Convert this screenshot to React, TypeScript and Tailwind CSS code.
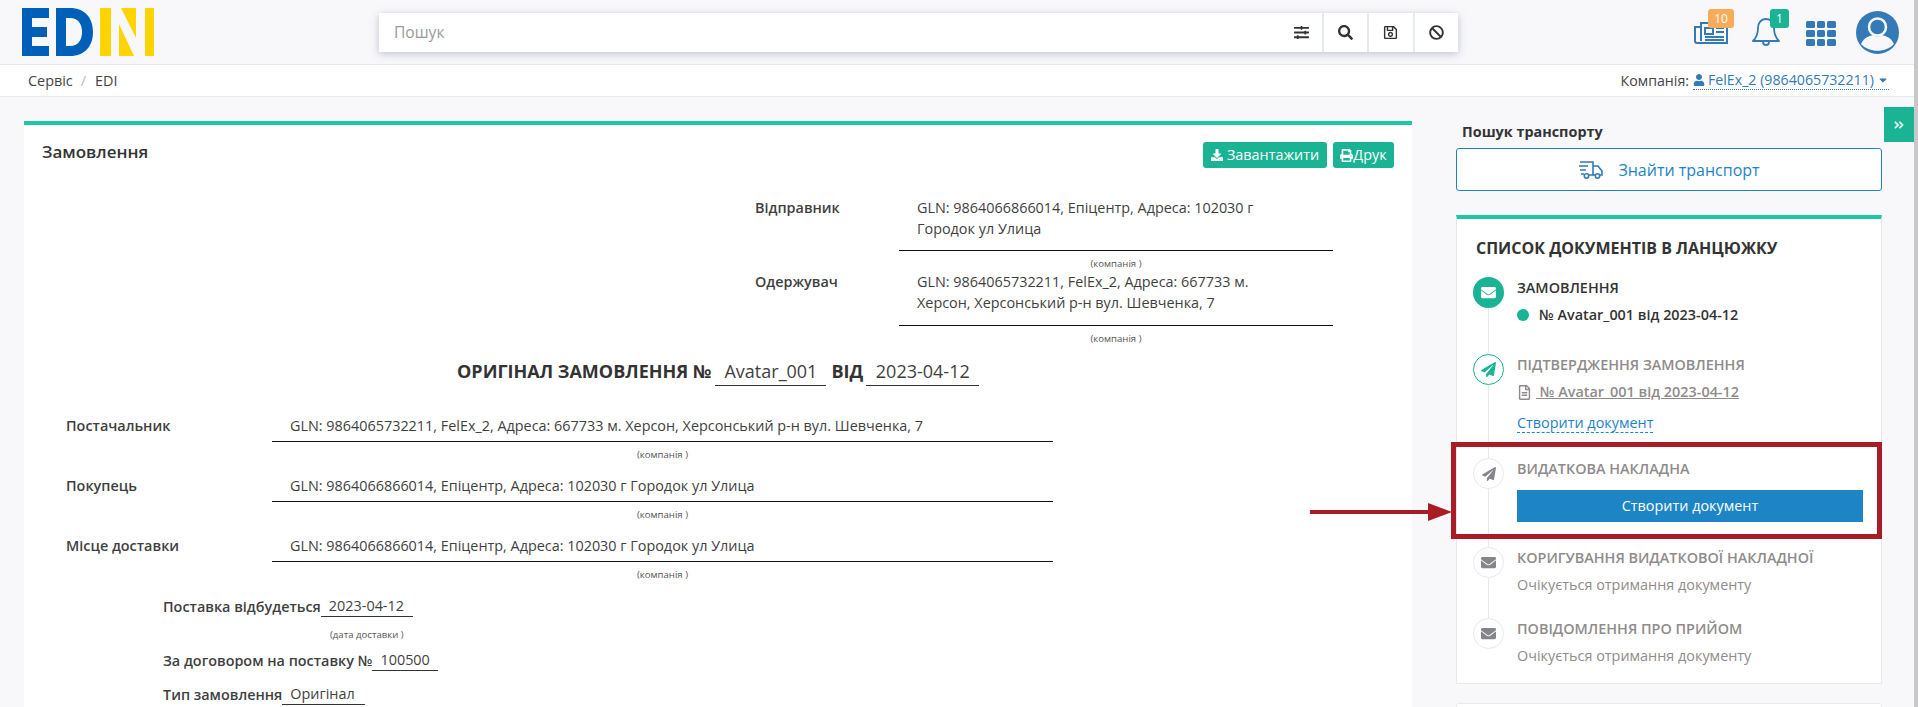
import React from 'react';
import {
  FaAngleDoubleRight,
  FaBan,
  FaCaretDown,
  FaDownload,
  FaEnvelope,
  FaPaperPlane,
  FaPrint,
  FaRegFileAlt,
  FaRegSave,
  FaSearch,
  FaSlidersH,
  FaUser,
} from 'react-icons/fa';

const FONT = "font-['Open_Sans','Noto_Sans',sans-serif]";

function Logo() {
  return (
    <svg width="134" height="48" viewBox="0 0 134 48" className="ml-[21px]">
      <path d="M1 0h27v10H11v9h15v10H11v9h17v10H1z" fill="#0060b9" />
      <path d="M35 0h14c15 0 23 10 23 24s-8 24-23 24H35zM45 10v28h4c8 0 12-6 12-14s-4-14-12-14z" fill="#0060b9" />
      <rect x="79" y="0" width="11" height="48" fill="#ffd400" />
      <path d="M100 0h15v30z" fill="#ffd400" />
      <path d="M98 16l15 32H98z" fill="#ffd400" />
      <rect x="124" y="0" width="9" height="48" fill="#ffd400" />
    </svg>
  );
}

function TopIcons() {
  return (
    <div className="absolute right-[14px] top-0 h-16 w-[212px]">
      <div className="absolute left-[2px] top-[21px] text-[#337ab7]">
        <svg width="34" height="23" viewBox="0 0 34 23" fill="none" stroke="currentColor" strokeWidth="2">
          <path d="M7 2h26v20H3a2 2 0 0 1-2-2V6h6zM7 6v14" />
          <path d="M11 7h8v6h-8zM22 7h8M22 11h8M11 16h19M11 19h19" />
        </svg>
      </div>
      <div className="absolute left-[16px] top-[9px] flex h-[19px] w-[26px] items-center justify-center rounded-[3px] bg-[#f8ac59] text-[12px] text-white">
        10
      </div>
      <svg width="28" height="30" viewBox="0 0 28 30" fill="none" stroke="#337ab7" strokeWidth="1.8" className="absolute left-[60px] top-[17px]">
        <path d="M14 2c-5 0-8 4-8 9 0 6-2 10-5 13h26c-3-3-5-7-5-13 0-5-3-9-8-9z" strokeLinejoin="round" />
        <path d="M11 25a3 3 0 0 0 6 0" />
      </svg>
      <div className="absolute left-[78px] top-[9px] flex h-[19px] w-[19px] items-center justify-center rounded-[3px] bg-[#1ab394] text-[12px] text-white">
        1
      </div>
      <div className="absolute left-[114px] top-[21px] grid grid-cols-3 gap-[2px]">
        {Array.from({ length: 9 }).map((_, i) => (
          <span key={i} className="h-[7px] w-[8.5px] rounded-[1.5px] bg-[#337ab7]" />
        ))}
      </div>
      <svg width="43" height="43" viewBox="0 0 43 43" className="absolute left-[164px] top-[11px]">
        <circle cx="21.5" cy="21.5" r="21.5" fill="#337ab7" />
        <circle cx="21.5" cy="16" r="8.5" fill="none" stroke="#f8f8fb" strokeWidth="2.5" />
        <path d="M5 33c3-7 9-8 12-9 3 2 6 2 9 0 3 1 9 2 12 9-8 9-25 9-33 0z" fill="#f8f8fb" />
      </svg>
    </div>
  );
}

function SearchBar() {
  return (
    <div className="absolute left-[379px] top-[13px] flex h-[39px] w-[1079px] bg-white shadow-[0_2px_8px_rgba(90,95,130,0.35)]">
      <div className="flex flex-1 items-center pl-[15px] text-[15.6px] text-[#9a9a9a]">Пошук</div>
      <div className="flex w-[51px] items-center justify-center pl-[10px] text-[#333]">
        <FaSlidersH size={15} />
      </div>
      {[FaSearch, FaRegSave, FaBan].map((Icon, i) => (
        <div key={i} className="flex w-[45.5px] items-center justify-center border-l-2 border-[#e7eaec] text-[#333]">
          <Icon size={15} />
        </div>
      ))}
    </div>
  );
}

function Field({ value, caption, width }: { value: string; caption: string; width: string }) {
  return (
    <div className={width}>
      <div className="h-[33px] border-b border-[#111] pl-[18px] pt-[7px] leading-[20px]">{value}</div>
      <div className="mt-[7px] text-center text-[9.6px] leading-[12px] text-[#555]">{caption}</div>
    </div>
  );
}

function Party({ label, value }: { label: string; value: string }) {
  return (
    <div className="flex h-[60px] pl-[42px]">
      <div className="w-[206px] pt-[7px] font-semibold leading-[20px]">{label}</div>
      <Field value={value} caption="(компанія )" width="w-[781px]" />
    </div>
  );
}

function Inline({ label, value, width, caption }: { label: string; value: string; width: string; caption?: string }) {
  return (
    <div className="flex items-end leading-[20px]">
      <span className="font-semibold">{label}</span>
      <span className={`${width} relative border-b border-[#333] pl-[8px]`}>
        {value}
        {caption && (
          <span className="absolute left-0 right-0 top-[33px] text-center text-[9.6px] leading-[12px] whitespace-nowrap text-[#555]">
            {caption}
          </span>
        )}
      </span>
    </div>
  );
}

function OrderCard() {
  return (
    <div className="h-[700px] w-[1388px] border-t-4 border-[#1ec8a5] bg-white text-[14.4px] text-[#3f3f3f]">
      <div className="flex h-[62px] items-start justify-between pl-[18px] pr-[18px] pt-[17px]">
        <div className="text-[17px] font-semibold leading-[20px] text-[#333]">Замовлення</div>
        <div className="flex gap-[6px] text-[14.4px] text-white">
          <div className="flex h-[26px] w-[124px] items-center justify-center gap-[4px] rounded-[3px] bg-[#1ab394]">
            <FaDownload size={12} />
            Завантажити
          </div>
          <div className="flex h-[26px] w-[61px] items-center justify-center rounded-[3px] bg-[#1ab394]">
            <FaPrint size={13} />
            Друк
          </div>
        </div>
      </div>

      <div className="ml-[731px] flex h-[84px]">
        <div className="w-[144px] pt-[10px] font-semibold leading-[21px]">Відправник</div>
        <div className="w-[434px]">
          <div className="h-[64px] border-b border-[#111] pl-[18px] pr-[40px] pt-[10px] leading-[21px]">
            GLN: 9864066866014, Епіцентр, Адреса: 102030 г Городок ул Улица
          </div>
          <div className="mt-[7px] text-center text-[9.6px] leading-[12px] text-[#555]">(компанія )</div>
        </div>
      </div>
      <div className="ml-[731px] flex h-[87px]">
        <div className="w-[144px] font-semibold leading-[21px]">Одержувач</div>
        <div className="w-[434px]">
          <div className="h-[55px] border-b border-[#111] pl-[18px] pr-[40px] leading-[21px]">
            GLN: 9864065732211, FelEx_2, Адреса: 667733 м. Херсон, Херсонський р-н вул. Шевченка, 7
          </div>
          <div className="mt-[7px] text-center text-[9.6px] leading-[12px] text-[#555]">(компанія )</div>
        </div>
      </div>

      <div className="ml-[433px] flex h-[51px] items-start text-[18px] leading-[27px]">
        <span className="font-bold text-[#333]">ОРИГІНАЛ ЗАМОВЛЕННЯ №</span>
        <span className="ml-[4px] w-[111px] border-b border-[#333] text-center">Avatar_001</span>
        <span className="ml-[5px] font-bold text-[#333]">ВІД</span>
        <span className="ml-[3px] w-[113px] border-b border-[#333] text-center">2023-04-12</span>
      </div>

      <Party label="Постачальник" value="GLN: 9864065732211, FelEx_2, Адреса: 667733 м. Херсон, Херсонський р-н вул. Шевченка, 7" />
      <Party label="Покупець" value="GLN: 9864066866014, Епіцентр, Адреса: 102030 г Городок ул Улица" />
      <Party label="Місце доставки" value="GLN: 9864066866014, Епіцентр, Адреса: 102030 г Городок ул Улица" />

      <div className="ml-[139px] mt-[7px]">
        <Inline label="Поставка відбудеться" value="2023-04-12" width="w-[92px]" caption="(дата доставки )" />
      </div>
      <div className="ml-[139px] mt-[33px]">
        <Inline label="За договором на поставку №" value="100500" width="w-[66px]" />
      </div>
      <div className="ml-[139px] mt-[13px]">
        <Inline label="Тип замовлення" value="Оригінал" width="w-[83px]" />
      </div>
    </div>
  );
}

function Step({
  icon,
  active,
  title,
  children,
  className,
}: {
  icon: React.ReactNode;
  active?: 'filled' | 'outline';
  title: string;
  children: React.ReactNode;
  className: string;
}) {
  const circle =
    active === 'filled'
      ? 'bg-[#1ab394] text-white'
      : active === 'outline'
        ? 'border border-[#1ab394] bg-white text-[#1ab394]'
        : 'border border-[#e7eaec] bg-white text-[#85868a]';
  return (
    <div className={`relative flex ${className}`}>
      <div className={`flex h-[31px] w-[31px] shrink-0 items-center justify-center rounded-full ${circle}`}>{icon}</div>
      <div className="ml-[13px] flex-1 pt-[1px]">
        <div className={`text-[14.4px] font-semibold leading-[20px] ${active === 'filled' ? 'text-[#333]' : 'text-[#8f8b8b]'}`}>
          {title}
        </div>
        {children}
      </div>
    </div>
  );
}

function ChainCard() {
  return (
    <div className="mt-[24px] h-[469px] border-x border-b border-[#e7eaec] border-t-4 border-t-[#1ec8a5] bg-white">
      <div className="pl-[19px] pt-[18px] text-[16px] font-bold leading-[22px] text-[#333]">СПИСОК ДОКУМЕНТІВ В ЛАНЦЮЖКУ</div>
      <div className="relative ml-[16px] mr-[18px] mt-[18px]">
        <div className="absolute left-[15px] top-[10px] h-[340px] w-px bg-[#e7eaec]" />
        <Step
          className="h-[77px]"
          active="filled"
          title="ЗАМОВЛЕННЯ"
          icon={<FaEnvelope size={15} />}
        >
          <div className="mt-[7px] flex items-center text-[14.4px] font-semibold leading-[20px] text-[#333]">
            <span className="mr-[10px] h-[12px] w-[12px] rounded-full bg-[#1ab394]" />
            № Avatar_001 від 2023-04-12
          </div>
        </Step>
        <Step
          className="h-[104px]"
          active="outline"
          title="ПІДТВЕРДЖЕННЯ ЗАМОВЛЕННЯ"
          icon={<FaPaperPlane size={15} />}
        >
          <div className="mt-[7px] flex items-center text-[14.4px] font-semibold leading-[20px] text-[#8f8b8b]">
            <FaRegFileAlt size={15} className="mr-[4px]" />
            <span className="underline">&nbsp;№ Avatar_001 від 2023-04-12</span>
          </div>
          <div className="mt-[12px] w-fit border-b border-dashed border-[#1d84c6] text-[14.4px] leading-[18px] text-[#1d84c6]">
            Створити документ
          </div>
        </Step>
        <Step className="h-[89px]" title="ВИДАТКОВА НАКЛАДНА" icon={<FaPaperPlane size={14} />}>
          <div className="mt-[11px] flex h-[32px] w-[346px] items-center justify-center bg-[#1d84c6] text-[14.4px] text-white">
            Створити документ
          </div>
        </Step>
        <Step className="h-[71px]" title="КОРИГУВАННЯ ВИДАТКОВОЇ НАКЛАДНОЇ" icon={<FaEnvelope size={15} />}>
          <div className="mt-[7px] text-[14.4px] leading-[20px] text-[#8f8b8b]">Очікується отримання документу</div>
        </Step>
        <Step className="h-[60px]" title="ПОВІДОМЛЕННЯ ПРО ПРИЙОМ" icon={<FaEnvelope size={15} />}>
          <div className="mt-[7px] text-[14.4px] leading-[20px] text-[#8f8b8b]">Очікується отримання документу</div>
        </Step>
      </div>
    </div>
  );
}

function Sidebar() {
  return (
    <div className="ml-[44px] w-[426px] pt-[24px]">
      <div className="pl-[6px] text-[14.4px] font-bold leading-[22px] text-[#333]">Пошук транспорту</div>
      <div className="mt-[5px] flex h-[43px] items-center justify-center gap-[14px] rounded-[3px] border border-[#1d84c6] bg-white text-[16px] text-[#1d84c6]">
        <svg width="26" height="20" viewBox="0 0 26 20" fill="none" stroke="#337ab7" strokeWidth="1.6">
          <path d="M2 2h13v13h-4M1 6h9M2 10h6M3 14h3" />
          <path d="M15 6h5l4 5v4h-2M15 15h2" />
          <circle cx="8.5" cy="16" r="2.2" />
          <circle cx="19.5" cy="16" r="2.2" />
        </svg>
        Знайти транспорт
      </div>
      <ChainCard />
      <div className="mt-[19px] h-[20px] rounded-t-[3px] border border-[#e7eaec] bg-white" />
    </div>
  );
}

export default function App() {
  return (
    <div className={`${FONT} relative h-[707px] w-[1918px] overflow-hidden bg-[#f8f8fb]`}>
      <header className="relative flex h-[65px] items-start border-b border-[#e7eaec] pt-[8px]">
        <Logo />
        <SearchBar />
        <TopIcons />
      </header>
      <div className="flex h-[32px] items-center justify-between border-b border-[#e7eaec] bg-white pl-[28px] pr-[29px] text-[14.4px] text-[#444]">
        <div className="flex items-center">
          Сервіс<span className="mx-[8px] text-[#bbb]">/</span>
          <span className="ml-[1px]">EDI</span>
        </div>
        <div className="flex items-center text-[14.2px]">
          Компанія:
          <span className="ml-[4px] flex items-center border-b border-dotted border-[#337ab7] leading-[18px] text-[#337ab7]">
            <FaUser size={12} className="mr-[3px]" />
            FelEx_2 (9864065732211)
            <FaCaretDown size={12} className="ml-[3px]" />
          </span>
        </div>
      </div>

      <div className="flex pl-[24px]">
        <div className="pt-[24px]">
          <OrderCard />
        </div>
        <Sidebar />
      </div>

      {/* collapse tab + page scrollbar */}
      <div className="absolute right-0 top-[107px] flex h-[35px] w-[34px] items-center justify-center bg-[#1ab394] pr-[4px] text-[#d7f3ec]">
        <FaAngleDoubleRight size={12} />
      </div>
      <div className="absolute bottom-0 right-0 top-0 w-[4px] bg-[#c8c8c8]" />

      {/* red annotation */}
      <div className="absolute left-[1451px] top-[442px] h-[97px] w-[431px] border-[5px] border-[#a91b25]" />
      <div className="absolute left-[1310px] top-[510px] h-[4px] w-[120px] bg-[#a91b25]" />
      <svg width="24" height="18" viewBox="0 0 24 18" className="absolute left-[1428px] top-[503px]">
        <path d="M0 0l24 9-24 9z" fill="#a91b25" />
      </svg>
    </div>
  );
}
